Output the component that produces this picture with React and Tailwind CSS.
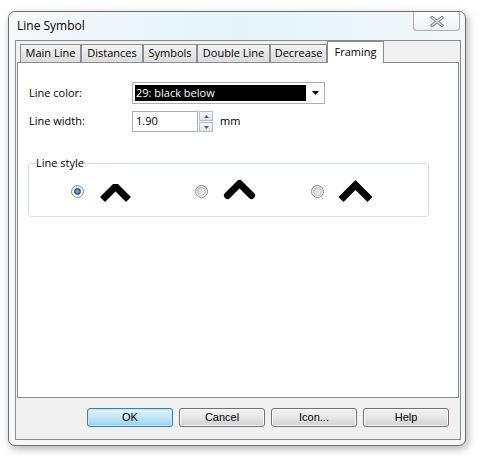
import React, { useState } from 'react';

const uiFont = { fontFamily: '"Open Sans", "Noto Sans", sans-serif' };
const btnFont = { fontFamily: '"Liberation Sans", Arial, sans-serif' };

const tabs = [
    { label: 'Main Line', w: 'w-[61px]' },
    { label: 'Distances', w: 'w-[62px]' },
    { label: 'Symbols', w: 'w-[54px]' },
    { label: 'Double Line', w: 'w-[73px]' },
    { label: 'Decrease', w: 'w-[57px]' },
    { label: 'Framing', w: 'w-[57px]' },
];

function Radio({ checked }) {
    return (
        <div className="w-[13px] h-[13px] rounded-full border border-[#8a8a8a] bg-linear-to-b from-[#e6e6e6] to-[#ffffff] flex items-center justify-center shrink-0">
            {checked ? (
                <div className="w-[7px] h-[7px] rounded-full border border-[#1b3f5f] bg-radial from-[#6cc0f0] to-[#1a5a8e]" />
            ) : (
                <div className="w-[9px] h-[9px] rounded-full bg-linear-to-br from-[#cfcfcf] to-[#f7f7f7] border border-[#bdbdbd]" />
            )}
        </div>
    );
}

// three framing styles: bevel / round / miter
function Chevron({ kind }) {
    const shapes = {
        bevel: { d: 'M7.5 22.5 L20.5 9.5 L33.5 22.5', join: 'bevel', cap: 'butt' },
        round: { d: 'M8.5 18.5 L20.5 6.5 L32.5 18.5', join: 'round', cap: 'round' },
        miter: { d: 'M6 22.5 L20.5 8 L35 22.5', join: 'miter', cap: 'butt' },
    };
    const s = shapes[kind];
    return (
        <svg width="42" height="28" viewBox="0 0 42 28" className="shrink-0">
            <path d={s.d} fill="none" stroke="#000" strokeWidth="7" strokeLinejoin={s.join} strokeLinecap={s.cap} strokeMiterlimit="4" />
        </svg>
    );
}

function Button({ children, primary }) {
    return (
        <button
            style={btnFont}
            className={`w-[86px] h-[19px] rounded-[3px] border text-[11px] leading-none text-black flex items-center justify-center ${
                primary
                    ? 'border-[#3c7fb1] bg-linear-to-b from-[#e5f4fc] via-[#c4e5f6] to-[#98d1ef] shadow-[inset_0_0_0_1px_#bfe7fb]'
                    : 'border-[#707070] bg-linear-to-b from-[#f2f2f2] via-[#e6e6e6] to-[#cfcfcf] shadow-[inset_0_0_0_1px_#fcfcfc]'
            }`}
        >
            {children}
        </button>
    );
}

export default function App() {
    const [style, setStyle] = useState(0);

    return (
        <div className="w-[483px] h-[461px] bg-white pl-[8px] pt-[11px]" style={uiFont}>
            <div className="w-[458px] h-[435px] rounded-[7px] border border-[#6e6e6e] bg-[#f4f8fb] shadow-[2px_3px_8px_rgba(0,0,0,0.3)] flex flex-col">
                {/* title bar */}
                <div className="h-[28px] flex items-start rounded-t-[7px] bg-linear-to-r from-[#f6f9fb] via-[#e3f4f9] to-[#f3f8fa]">
                    <span className="mt-[5px] ml-[8px] text-[12px] text-black">Line Symbol</span>
                    <div className="ml-auto mr-[5px] w-[47px] h-[19px] rounded-b-[4px] border border-t-0 border-[#a9adb2] bg-linear-to-b from-[#fbfdfe] to-[#eef3f6] flex items-center justify-center">
                        <svg width="14" height="11" viewBox="0 0 14 11">
                            <path d="M2 1.5 L7 5.5 L12 1.5 M2 9.5 L7 5.5 L12 9.5" fill="none" stroke="#6b717a" strokeWidth="3" strokeLinecap="square" />
                            <path d="M2 1.5 L7 5.5 L12 1.5 M2 9.5 L7 5.5 L12 9.5" fill="none" stroke="#ffffff" strokeWidth="1.2" strokeLinecap="square" />
                        </svg>
                    </div>
                </div>

                {/* client area */}
                <div className="ml-[6px] w-[446px] h-[400px] border border-[#8a8a8a] bg-[#f0f0f0] flex flex-col">
                    {/* tab strip */}
                    <div className="h-[21px] flex items-end pl-[3px] mx-[1px] relative z-10">
                        {tabs.map((t, i) =>
                            i === tabs.length - 1 ? (
                                <div key={t.label} className={`${t.w} h-[22px] -mb-[1px] border border-b-0 border-[#898c95] bg-white flex items-start justify-center pt-[2px] text-[11px] text-black`}>
                                    {t.label}
                                </div>
                            ) : (
                                <div key={t.label} className={`${t.w} h-[18px] border border-b-0 border-[#898c95] bg-linear-to-b from-[#f3f3f3] to-[#dcdcdc] flex items-center justify-center text-[11px] text-black`}>
                                    {t.label}
                                </div>
                            )
                        )}
                    </div>

                    {/* tab panel */}
                    <div className="mx-[1px] h-[336px] border border-[#898c95] bg-white pl-[11px] pt-[19px] text-[11px] text-black">
                        <div className="flex items-center h-[22px]">
                            <span className="w-[103px]">Line color:</span>
                            <div className="w-[193px] h-[22px] border border-[#abadb3] bg-white flex items-center pl-[2px] pr-[5px]">
                                <div className="w-[171px] h-[16px] bg-black text-white flex items-center pl-[1px]">29: black below</div>
                                <svg width="7" height="4" viewBox="0 0 7 4" className="ml-auto">
                                    <path d="M0 0 H7 L3.5 4 Z" fill="#000" />
                                </svg>
                            </div>
                        </div>

                        <div className="flex items-center h-[21px] mt-[7px]">
                            <span className="w-[103px]">Line width:</span>
                            <div className="w-[66px] h-[21px] border border-[#abadb3] bg-white flex items-center pl-[3px]">1.90</div>
                            <div className="ml-[1px] flex flex-col gap-[1px]">
                                {[0, 1].map((n) => (
                                    <div key={n} className="w-[14px] h-[10px] border border-[#b4bccc] bg-linear-to-b from-[#f6f7f9] to-[#dfe3ea] flex items-center justify-center">
                                        <svg width="5" height="3" viewBox="0 0 5 3">
                                            <path d={n === 0 ? 'M0 3 L2.5 0 L5 3 Z' : 'M0 0 L2.5 3 L5 0 Z'} fill="#4d6185" />
                                        </svg>
                                    </div>
                                ))}
                            </div>
                            <span className="ml-[7px]">mm</span>
                        </div>

                        <fieldset className="mt-[23px] ml-[-1px] w-[401px] h-[62px] border border-[#d5dfe5] rounded-[3px] px-[7px]">
                            <legend className="px-0 leading-[16px]">Line style</legend>
                            <div className="flex items-center mt-[6px] pl-[35px]">
                                {['bevel', 'round', 'miter'].map((k, i) => (
                                    <div key={k} onClick={() => setStyle(i)} className={`flex items-center ${i === 1 ? 'ml-[58px]' : i === 2 ? 'ml-[50px]' : ''}`}>
                                        <Radio checked={style === i} />
                                        <div className="ml-[11px]">
                                            <Chevron kind={k} />
                                        </div>
                                    </div>
                                ))}
                            </div>
                        </fieldset>
                    </div>

                    {/* dialog buttons */}
                    <div className="flex justify-end gap-[6px] pr-[11px] mt-[10px]">
                        <Button primary>OK</Button>
                        <Button>Cancel</Button>
                        <Button>Icon...</Button>
                        <Button>Help</Button>
                    </div>
                </div>
            </div>
        </div>
    );
}
